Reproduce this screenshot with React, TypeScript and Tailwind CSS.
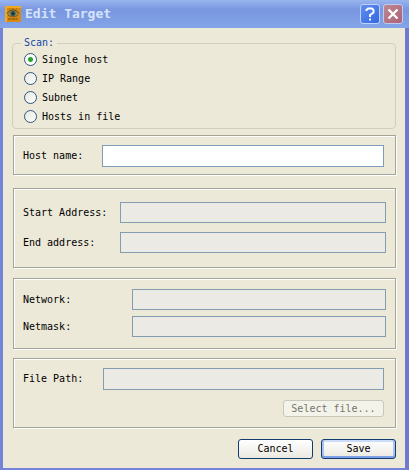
import { useState } from "react";
import type { ReactNode } from "react";

const scanModes = ["Single host", "IP Range", "Subnet", "Hosts in file"];

function Panel({ children, className }: { children: ReactNode; className: string }) {
  return (
    <section
      className={`ml-px border border-[#a5a499] pl-[9px] shadow-[1px_1px_0_#fff,inset_1px_1px_0_#fff] ${className}`}
    >
      {children}
    </section>
  );
}

function Field({
  id,
  label,
  labelWidth,
  height,
  disabled = false,
}: {
  id: string;
  label: string;
  labelWidth: string;
  height: string;
  disabled?: boolean;
}) {
  return (
    <div className="flex items-center">
      <label htmlFor={id} className={`shrink-0 ${labelWidth}`}>
        {label}
      </label>
      <input
        id={id}
        type="text"
        disabled={disabled}
        className={`min-w-0 flex-1 border border-[#7f9db9] bg-white px-1 outline-none disabled:border-[#839caf] disabled:bg-[#ebeae4] ${height}`}
      />
    </div>
  );
}

function EyeLogo() {
  return (
    <svg viewBox="0 0 16 16" className="h-4 w-4 shrink-0" aria-hidden="true">
      <rect width="16" height="16" rx="1" fill="#d98a10" />
      <path d="M0 0h16v2H2v14H0z" fill="#f0a820" />
      <path d="M2 8C4 4.500 6 4 8 4s4.500 1 6 4c-2 2.500-4 3-6 3S4 10.500 2 8z" fill="#a8853c" />
      <path d="M2 7.500C4 4.500 6 4 8 4s4.500 1 6 3.500" fill="none" stroke="#5b441c" />
      <path d="M3 9c2.500 2.300 7.500 2.300 10 0" fill="none" stroke="#7b5a20" />
      <circle cx="8" cy="7.500" r="2.500" fill="#1c5a60" />
      <circle cx="8" cy="7.500" r="1" fill="#14222a" />
      <path d="M5 3.500 4.500 2.500M8 3V2M11 3.500l.5-1" stroke="#8b6018" />
      <path d="M3 13h10" stroke="#6b4510" strokeDasharray="2 .5" />
    </svg>
  );
}

export default function App() {
  const [mode, setMode] = useState(scanModes[0]);

  return (
    <main className="min-h-screen border-r-4 border-b-2 border-l-[3px] border-r-[#7079cf] border-b-[#7485d8] border-l-[#7485d8] bg-[#ece9d8] font-['DejaVu_Sans_Mono',monospace] text-[10px] leading-[14px] text-black">
      <header className="-mr-1 -ml-[3px] flex h-7 items-center bg-linear-to-b from-[#99b5f0] via-[#7996df] via-35% to-[#83a5e8] pr-[6px] pl-[5px]">
        <EyeLogo />
        <h1 className="ml-1 flex-1 text-[13px] leading-4 font-bold text-[#d6e4fb]">Edit Target</h1>
        <div className="flex gap-[3px]">
          <button
            type="button"
            aria-label="Help"
            className="grid h-5 w-5 place-items-center rounded-[3px] border border-[#c0d1fa] bg-linear-to-br from-[#5f8df0] to-[#3269e2]"
          >
            <svg viewBox="0 0 18 18" className="h-[18px] w-[18px]" fill="none" stroke="#fff" strokeWidth="2">
              <path d="M5.500 6V5L7 3.500h4L12.500 5v2.500L9 10v2" />
              <path d="M9 13.500v2" />
            </svg>
          </button>
          <button
            type="button"
            aria-label="Close"
            className="grid h-5 w-5 place-items-center rounded-[3px] border border-[#c5c9ee] bg-linear-to-br from-[#bd8794] to-[#ab6376]"
          >
            <svg viewBox="0 0 18 18" className="h-[18px] w-[18px]" stroke="#fff" strokeWidth="2.300">
              <path d="m4.500 4.500 9 9M13.500 4.500l-9 9" />
            </svg>
          </button>
        </div>
      </header>

      <form className="px-[9px] pt-2 pb-[9px]" onSubmit={(event) => event.preventDefault()}>
        <fieldset className="rounded-[4px] border border-[#d0cfbd] pb-[2px] pl-[11px]">
          <legend className="-ml-[3px] px-[3px] text-[#1546a8]">Scan:</legend>
          {scanModes.map((name) => (
            <label key={name} className="flex h-[19px] w-fit items-center gap-[5px]">
              <input
                type="radio"
                name="scan"
                checked={mode === name}
                onChange={() => setMode(name)}
                className="h-[13px] w-[13px] appearance-none rounded-full border border-[#31557e] bg-[linear-gradient(135deg,#e6e6e0,#fff)] checked:bg-[radial-gradient(circle,#27a527_0px,#27a527_2px,#fff_3px)]"
              />
              {name}
            </label>
          ))}
        </fieldset>

        <Panel className="mt-[6px] pt-[9px] pr-[11px] pb-[7px]">
          <Field id="host" label="Host name:" labelWidth="w-[79px]" height="h-[22px]" />
        </Panel>

        <Panel className="mt-[13px] flex flex-col gap-[9px] pt-[13px] pr-[9px] pb-[14px]">
          <Field id="start" label="Start Address:" labelWidth="w-[97px]" height="h-[21px]" disabled />
          <Field id="end" label="End address:" labelWidth="w-[97px]" height="h-[21px]" disabled />
        </Panel>

        <Panel className="mt-[10px] flex flex-col gap-[6px] pt-[10px] pr-[9px] pb-[11px]">
          <Field id="network" label="Network:" labelWidth="w-[109px]" height="h-[21px]" disabled />
          <Field id="netmask" label="Netmask:" labelWidth="w-[109px]" height="h-[21px]" disabled />
        </Panel>

        <Panel className="mt-[9px] pt-[9px] pr-[11px] pb-[10px]">
          <Field id="path" label="File Path:" labelWidth="w-[80px]" height="h-[22px]" disabled />
          <div className="mt-[10px] flex justify-end">
            <button
              type="button"
              disabled
              className="h-[17px] w-[101px] rounded-[3px] border border-[#c9c7ba] bg-[#f4f3ea] text-[#77766e]"
            >
              Select file...
            </button>
          </div>
        </Panel>

        <div className="mt-[11px] flex justify-end gap-2">
          <button
            type="button"
            className="h-5 w-[75px] rounded-[3px] border border-[#123b70] bg-linear-to-b from-white to-[#ebe9e0]"
          >
            Cancel
          </button>
          <button
            type="submit"
            className="h-5 w-[75px] rounded-[3px] border border-[#123b70] bg-linear-to-b from-white to-[#ebe9e0] shadow-[inset_0_-2px_0_#7f9fe6,inset_2px_0_0_#aac3f2,inset_-2px_0_0_#aac3f2,inset_0_2px_0_#cbddf9]"
          >
            Save
          </button>
        </div>
      </form>
    </main>
  );
}
